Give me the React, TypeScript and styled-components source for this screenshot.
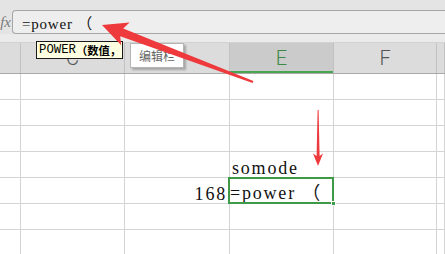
import React from "react";
import styled, { createGlobalStyle } from "styled-components";

const Global = createGlobalStyle`
  html, body { margin: 0; padding: 0; background: #ffffff; overflow: hidden; }
  * { box-sizing: border-box; }
`;

const Page = styled.div`
  position: relative;
  width: 445px;
  height: 254px;
  overflow: hidden;
  background: #ffffff;
  font-family: "Liberation Serif", "Noto Sans CJK SC", serif;
`;

const FormulaBar = styled.div`
  display: flex;
  align-items: flex-end;
  height: 34px;
  padding-top: 10px;
  background: #e4e4e4;
`;

const FxLabel = styled.div`
  width: 19px;
  height: 24px;
  margin-left: -7px;
  padding-right: 1px;
  display: flex;
  align-items: center;
  justify-content: flex-end;
  font-family: "Liberation Serif", serif;
  font-style: italic;
  font-size: 15px;
  color: #7a7a7a;
  flex-shrink: 0;
`;

const FormulaInput = styled.div`
  flex: 1;
  height: 24px;
  border: 1px solid #a6a6a6;
  border-right: none;
  border-radius: 4px 0 0 4px;
  background: #eeeeee;
  padding-left: 9px;
  display: flex;
  align-items: center;
  font-family: "Liberation Serif", "Noto Sans CJK SC", serif;
  font-size: 15px;
  letter-spacing: 0.8px;
  color: #111;
  white-space: pre;
`;

const Strip = styled.div`
  height: 8px;
  background: #ebebeb;
`;

const cols = "21px 104px 105px 104px 103px 1fr";

const HeaderRow = styled.div`
  display: grid;
  grid-template-columns: ${cols};
  height: 32px;
  border-top: 1px solid #d2d2d2;
  border-bottom: 1px solid #a9a9a9;
  background: #dcdcdc;
`;

const HeaderCell = styled.div<{ $active?: boolean }>`
  position: relative;
  display: flex;
  align-items: center;
  justify-content: center;
  border-right: 1px solid #c2c2c2;
  background: ${(p) => (p.$active ? "#cbcbcb" : "transparent")};
  color: ${(p) => (p.$active ? "#3d8a46" : "#555555")};
  font-family: Roboto, "Noto Sans", sans-serif;
  font-weight: 300;
  font-size: 20px;
  padding-bottom: 1px;
  ${(p) => (p.$active ? "box-shadow: inset 0 -2px 0 #4aa552;" : "")}
`;

const Row = styled.div`
  display: grid;
  grid-template-columns: ${cols};
  height: 26px;
`;

const Cell = styled.div<{ $align?: "left" | "right" }>`
  position: relative;
  display: flex;
  align-items: flex-end;
  justify-content: ${(p) => (p.$align === "right" ? "flex-end" : "flex-start")};
  border-right: 1px solid #d4d4d4;
  border-bottom: 1px solid #d4d4d4;
  padding: 0 2px 0 2px;
  font-family: "Liberation Serif", "Noto Sans CJK SC", serif;
  font-size: 18px;
  line-height: 1;
  letter-spacing: 1.8px;
  color: #111;
  white-space: pre;
`;

const SelectedCell = styled(Cell)`
  padding-left: 0;
  padding-bottom: 1px;
  &::after {
    content: "";
    position: absolute;
    top: -1px;
    left: -2px;
    right: -1px;
    bottom: -1px;
    border: 2px solid #3f9a47;
    pointer-events: none;
  }
`;

const FillHandle = styled.span`
  position: absolute;
  right: -3px;
  bottom: -3px;
  width: 5px;
  height: 5px;
  background: #3f9a47;
  border: 1px solid #ffffff;
  z-index: 2;
`;

const ArgTip = styled.div`
  position: absolute;
  left: 36px;
  top: 41px;
  width: 87px;
  height: 18px;
  overflow: hidden;
  background: #ffffe1;
  border: 1px solid #1a1a1a;
  padding-left: 2px;
  display: flex;
  align-items: center;
  white-space: nowrap;
  color: #000;
`;

const TipFn = styled.span`
  font-family: "Liberation Mono", monospace;
  font-size: 12.3px;
`;

const TipArgs = styled.span`
  font-family: "Noto Sans CJK SC", sans-serif;
  font-weight: 700;
  font-size: 11.3px;
`;

const NameTip = styled.div`
  position: absolute;
  left: 130px;
  top: 43px;
  width: 54px;
  height: 25px;
  background: #ffffff;
  border: 1px solid #b5b5b5;
  box-shadow: 2px 2px 2px rgba(0, 0, 0, 0.25);
  display: flex;
  align-items: center;
  justify-content: center;
  font-family: "Noto Sans CJK SC", sans-serif;
  font-size: 12px;
  color: #666666;
`;

const Annotations = styled.svg`
  position: absolute;
  left: 0;
  top: 0;
  width: 445px;
  height: 254px;
  pointer-events: none;
`;

const rows: { d?: string; e?: string; sel?: boolean }[] = [
  {},
  {},
  {},
  { e: "somode" },
  { d: "168", e: "=power （", sel: true },
  {},
  {},
];

export default function App() {
  return (
    <Page>
      <Global />
      <FormulaBar>
        <FxLabel>fx</FxLabel>
        <FormulaInput>=power （</FormulaInput>
      </FormulaBar>
      <Strip />
      <HeaderRow>
        <HeaderCell />
        <HeaderCell>C</HeaderCell>
        <HeaderCell>D</HeaderCell>
        <HeaderCell $active>E</HeaderCell>
        <HeaderCell>F</HeaderCell>
        <HeaderCell />
      </HeaderRow>
      {rows.map((r, i) => (
        <Row key={i}>
          <Cell />
          <Cell />
          <Cell $align="right">{r.d}</Cell>
          {r.sel ? (
            <SelectedCell>
              {r.e}
              <FillHandle />
            </SelectedCell>
          ) : (
            <Cell>{r.e}</Cell>
          )}
          <Cell />
          <Cell />
        </Row>
      ))}
      <ArgTip>
        <TipFn>POWER</TipFn>
        <TipArgs>（数值，</TipArgs>
      </ArgTip>
      <NameTip>编辑栏</NameTip>
      <Annotations viewBox="0 0 445 254">
        <polygon
          points="102,25 129.6,22.4 123.2,28.6 253.4,81.1 252.6,82.9 120.2,36.3 121.2,45.2"
          fill="#ee3a3c"
        />
        <polygon
          points="317.6,110 318.6,110 319.6,156 323,153.5 318,166 313,153.5 316.6,156"
          fill="#ee3a3c"
        />
      </Annotations>
    </Page>
  );
}
